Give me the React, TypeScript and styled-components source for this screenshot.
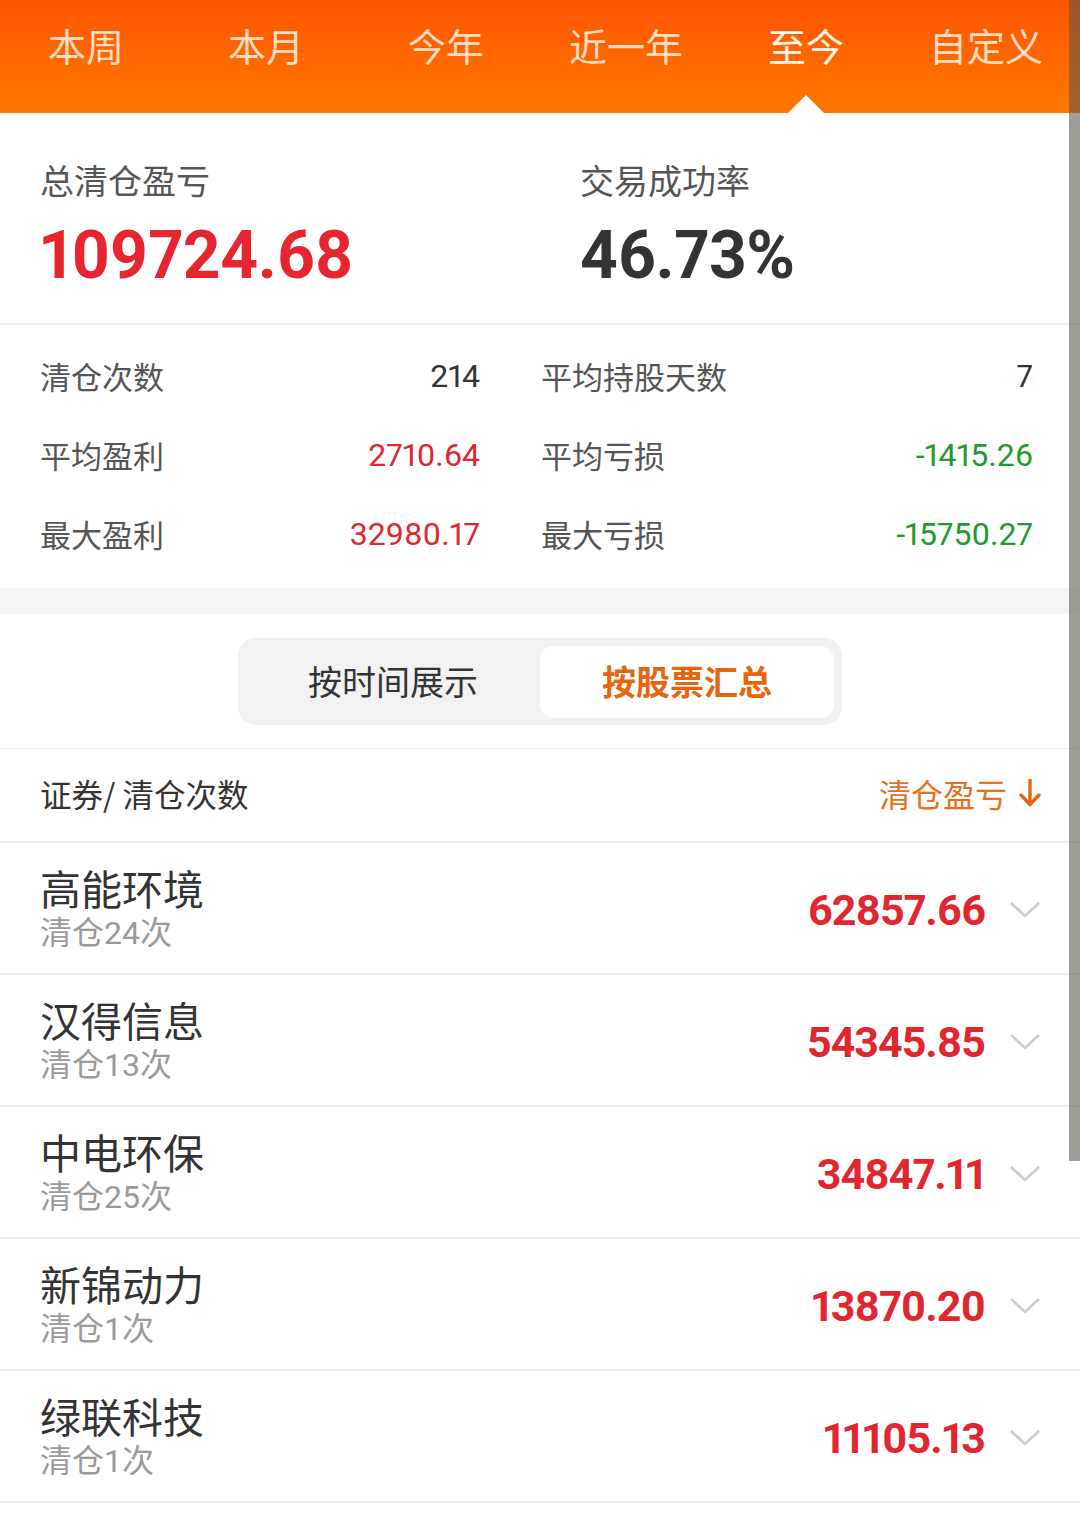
import React from "react";
import styled, { createGlobalStyle } from "styled-components";

const GlobalStyle = createGlobalStyle`
  html, body { margin: 0; padding: 0; background: #ffffff; }
  body { font-family: Roboto, "Noto Sans CJK SC", sans-serif; -webkit-font-smoothing: antialiased; }
  * { box-sizing: border-box; }
`;

const Page = styled.div`
  width: 1080px;
  min-height: 1513px;
  background: #ffffff;
  overflow: hidden;
`;

const TabBar = styled.div`
  height: 113px;
  background: linear-gradient(180deg, #ff5500 0%, #ff7800 100%);
  overflow: hidden;
`;

const TabRow = styled.div`
  display: grid;
  grid-template-columns: repeat(6, 180px);
  height: 100%;
  margin-left: -4px;
`;

const Tab = styled.div<{ $active?: boolean }>`
  position: relative;
  display: flex;
  justify-content: center;
  padding-top: 20px;
  font-size: 38px;
  line-height: 50px;
  color: ${(p) => (p.$active ? "#fff6ee" : "#ffdcc2")};
  font-family: "Noto Sans CJK SC", sans-serif;
`;

const Caret = styled.span`
  position: absolute;
  bottom: 0;
  left: 50%;
  transform: translateX(-50%);
  width: 0;
  height: 0;
  border-left: 18px solid transparent;
  border-right: 18px solid transparent;
  border-bottom: 18px solid #ffffff;
`;

const Summary = styled.section`
  display: grid;
  grid-template-columns: 540px 1fr;
  padding: 42px 0 0 40px;
  height: 212px;
  border-bottom: 2px solid #eeeeee;
`;

const SummaryItem = styled.div`
  display: flex;
  flex-direction: column;
`;

const SummaryLabel = styled.div`
  font-family: "Noto Sans CJK SC", sans-serif;
  font-size: 34px;
  line-height: 50px;
  color: #555555;
`;

const BigNumber = styled.div<{ $color: string }>`
  margin-top: 15px;
  font-family: Roboto, sans-serif;
  font-weight: 700;
  font-size: 66px;
  line-height: 72px;
  letter-spacing: -0.4px;
  font-variant-numeric: proportional-nums;
  color: ${(p) => p.$color};
`;

const StatsGrid = styled.section`
  display: grid;
  grid-template-columns: 440px 1fr;
  column-gap: 61px;
  padding: 11px 47px 15px 40px;
`;

const StatRow = styled.div`
  display: flex;
  align-items: center;
  justify-content: space-between;
  height: 79px;
`;

const StatLabel = styled.span`
  font-family: "Noto Sans CJK SC", sans-serif;
  font-size: 31px;
  color: #555555;
`;

const StatValue = styled.span<{ $color: string }>`
  font-family: Roboto, sans-serif;
  font-size: 32px;
  font-variant-numeric: proportional-nums;
  color: ${(p) => p.$color};
`;

const GrayBand = styled.div`
  height: 26px;
  background: #f5f5f5;
`;

const ToggleSection = styled.section`
  display: flex;
  justify-content: center;
  padding: 24px 0 23px;
  border-bottom: 1px solid #eeeeee;
`;

const Toggle = styled.div`
  display: flex;
  width: 604px;
  height: 87px;
  padding: 8px 8px 7px;
  border-radius: 18px;
  background: #f2f2f2;
`;

const ToggleOption = styled.div<{ $active?: boolean }>`
  flex: 1;
  display: flex;
  align-items: center;
  justify-content: center;
  padding-bottom: 4px;
  border-radius: 14px;
  font-family: "Noto Sans CJK SC", sans-serif;
  font-size: 34px;
  font-weight: ${(p) => (p.$active ? 700 : 400)};
  color: ${(p) => (p.$active ? "#e8650f" : "#333333")};
  background: ${(p) => (p.$active ? "#ffffff" : "transparent")};
`;

const ListHeader = styled.div`
  display: flex;
  align-items: center;
  justify-content: space-between;
  height: 94px;
  padding: 0 39px 4px 40px;
  border-bottom: 2px solid #eeeeee;
`;

const HeaderLeft = styled.span`
  font-family: "Noto Sans CJK SC", sans-serif;
  font-size: 31.5px;
  color: #333333;
`;

const SortButton = styled.span`
  display: flex;
  align-items: center;
  gap: 12px;
  font-family: "Noto Sans CJK SC", sans-serif;
  font-size: 32px;
  color: #e8701a;
`;

const StockRow = styled.div`
  display: flex;
  align-items: center;
  justify-content: space-between;
  height: 132px;
  padding: 0 39px 0 40px;
  border-bottom: 2px solid #eeeeee;
`;

const StockInfo = styled.div`
  display: flex;
  flex-direction: column;
`;

const StockName = styled.div`
  font-family: "Noto Sans CJK SC", sans-serif;
  font-size: 41px;
  line-height: 50px;
  color: #333333;
`;

const StockSub = styled.div`
  font-family: Roboto, "Noto Sans CJK SC", sans-serif;
  font-size: 32px;
  line-height: 42px;
  color: #9a9a9a;
`;

const StockRight = styled.div`
  display: flex;
  align-items: center;
  gap: 24px;
  margin-top: 4px;
`;

const StockValue = styled.span`
  font-family: Roboto, sans-serif;
  font-weight: 700;
  font-size: 43px;
  letter-spacing: -1px;
  font-variant-numeric: proportional-nums;
  color: #e0262f;
`;

const ScrollThumb = styled.div`
  position: fixed;
  top: 0;
  right: 0;
  width: 11px;
  height: 1161px;
  background: rgba(95, 85, 75, 0.58);
`;

const Chevron = () => (
  <svg width="32" height="18" viewBox="0 0 32 18">
    <polyline points="2,2 16,15 30,2" fill="none" stroke="#cccccc" strokeWidth="2.6" />
  </svg>
);

const DownArrow = () => (
  <svg width="22" height="28" viewBox="0 0 22 28">
    <line x1="11" y1="1" x2="11" y2="25" stroke="#e8650f" strokeWidth="3.4" strokeLinecap="round" />
    <polyline points="2,16 11,25.5 20,16" fill="none" stroke="#e8650f" strokeWidth="3.4" strokeLinecap="round" strokeLinejoin="round" />
  </svg>
);

const tabs = ["本周", "本月", "今年", "近一年", "至今", "自定义"];

const RED = "#e0262f";
const GREEN = "#1e9b2a";
const DARK = "#333333";

const stats: [string, string, string][] = [
  ["清仓次数", "214", DARK],
  ["平均持股天数", "7", DARK],
  ["平均盈利", "2710.64", RED],
  ["平均亏损", "-1415.26", GREEN],
  ["最大盈利", "32980.17", RED],
  ["最大亏损", "-15750.27", GREEN],
];

const stocks = [
  { name: "高能环境", count: "清仓24次", value: "62857.66" },
  { name: "汉得信息", count: "清仓13次", value: "54345.85" },
  { name: "中电环保", count: "清仓25次", value: "34847.11" },
  { name: "新锦动力", count: "清仓1次", value: "13870.20" },
  { name: "绿联科技", count: "清仓1次", value: "11105.13" },
];

export default function App() {
  return (
    <Page>
      <GlobalStyle />
      <TabBar>
        <TabRow>
          {tabs.map((t) => (
            <Tab key={t} $active={t === "至今"}>
              {t}
              {t === "至今" && <Caret />}
            </Tab>
          ))}
        </TabRow>
      </TabBar>

      <Summary>
        <SummaryItem>
          <SummaryLabel>总清仓盈亏</SummaryLabel>
          <BigNumber $color="#e52530">109724.68</BigNumber>
        </SummaryItem>
        <SummaryItem>
          <SummaryLabel>交易成功率</SummaryLabel>
          <BigNumber $color="#333333">46.73%</BigNumber>
        </SummaryItem>
      </Summary>

      <StatsGrid>
        {stats.map(([label, value, color]) => (
          <StatRow key={label}>
            <StatLabel>{label}</StatLabel>
            <StatValue $color={color}>{value}</StatValue>
          </StatRow>
        ))}
      </StatsGrid>

      <GrayBand />

      <ToggleSection>
        <Toggle>
          <ToggleOption>按时间展示</ToggleOption>
          <ToggleOption $active>按股票汇总</ToggleOption>
        </Toggle>
      </ToggleSection>

      <ListHeader>
        <HeaderLeft>证券/ 清仓次数</HeaderLeft>
        <SortButton>
          清仓盈亏
          <DownArrow />
        </SortButton>
      </ListHeader>

      {stocks.map((s) => (
        <StockRow key={s.name}>
          <StockInfo>
            <StockName>{s.name}</StockName>
            <StockSub>{s.count}</StockSub>
          </StockInfo>
          <StockRight>
            <StockValue>{s.value}</StockValue>
            <Chevron />
          </StockRight>
        </StockRow>
      ))}

      <ScrollThumb />
    </Page>
  );
}
